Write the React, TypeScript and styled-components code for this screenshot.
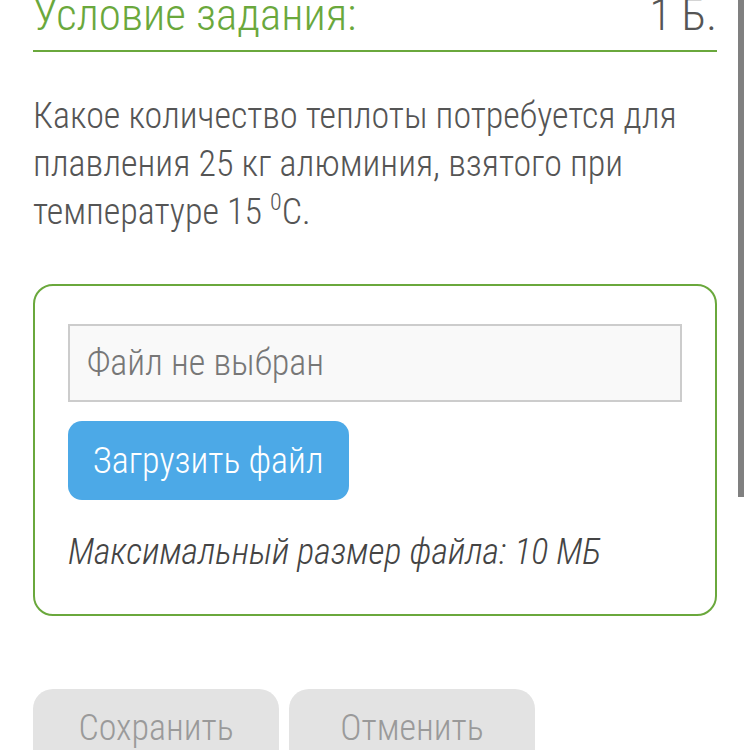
import React from "react";
import styled, { createGlobalStyle } from "styled-components";

const FONT = `"Roboto Condensed Light", "Roboto Condensed", "Liberation Sans Narrow", Roboto, sans-serif`;

const Global = createGlobalStyle`
  html, body { margin: 0; padding: 0; background: #fff; overflow: hidden; }
  body { font-family: ${FONT}; font-weight: 300; color: #555; }
  * { box-sizing: border-box; }
`;

const Page = styled.div`
  position: relative;
  width: 750px;
  height: 750px;
  overflow: hidden;
  padding: 0 33px;
`;

const Header = styled.div`
  display: flex;
  justify-content: space-between;
  align-items: baseline;
  margin-top: -9px;
  padding-bottom: 11px;
  border-bottom: 2px solid #6aa83c;
`;

const Title = styled.h1`
  margin: 0;
  font-size: 45px;
  line-height: 48px;
  font-weight: 300;
  color: #6aa83c;
`;

const Points = styled.span`
  font-size: 45px;
  line-height: 48px;
  color: #555;
`;

const Question = styled.p`
  margin: 40px 0 0;
  font-size: 36px;
  line-height: 48px;
  color: #555;
`;

const Sup = styled.sup`
  font-size: 24px;
  line-height: 0;
  vertical-align: 14px;
`;

const UploadCard = styled.div`
  margin-top: 48px;
  border: 2px solid #6aa83c;
  border-radius: 20px;
  padding: 38px 33px;
  display: flex;
  flex-direction: column;
  align-items: flex-start;
`;

const FileField = styled.div`
  width: 100%;
  height: 78px;
  background: #f9f9f9;
  border: 2px solid #cccccc;
  display: flex;
  align-items: center;
  padding: 0 17px;
  font-size: 36px;
  color: #777;
`;

const UploadButton = styled.button`
  margin-top: 19px;
  height: 79px;
  padding: 0 25px;
  border: none;
  border-radius: 14px;
  background: #4ca9e7;
  color: #fff;
  font-family: ${FONT};
  font-weight: 300;
  font-size: 36px;
`;

const Hint = styled.div`
  margin-top: 28px;
  font-size: 36px;
  line-height: 48px;
  font-style: italic;
  color: #444;
`;

const Actions = styled.div`
  margin-top: 73px;
  display: flex;
  gap: 10px;
`;

const ActionButton = styled.button`
  width: 246px;
  height: 80px;
  border: none;
  border-radius: 20px;
  background: #e3e3e3;
  color: #9a9a9a;
  font-family: ${FONT};
  font-weight: 300;
  font-size: 36px;
  display: flex;
  justify-content: center;
  padding: 18px 0 0;
`;

const ScrollThumb = styled.div`
  position: absolute;
  top: 0;
  right: 6px;
  width: 6px;
  height: 497px;
  background: #808080;
`;

export default function App() {
  return (
    <>
      <Global />
      <Page>
        <Header>
          <Title>Условие задания:</Title>
          <Points>1 Б.</Points>
        </Header>
        <Question>
          Какое количество теплоты потребуется для плавления 25 кг алюминия,
          взятого при температуре 15 <Sup>0</Sup>С.
        </Question>
        <UploadCard>
          <FileField>Файл не выбран</FileField>
          <UploadButton>Загрузить файл</UploadButton>
          <Hint>Максимальный размер файла: 10 МБ</Hint>
        </UploadCard>
        <Actions>
          <ActionButton>Сохранить</ActionButton>
          <ActionButton>Отменить</ActionButton>
        </Actions>
        <ScrollThumb />
      </Page>
    </>
  );
}
